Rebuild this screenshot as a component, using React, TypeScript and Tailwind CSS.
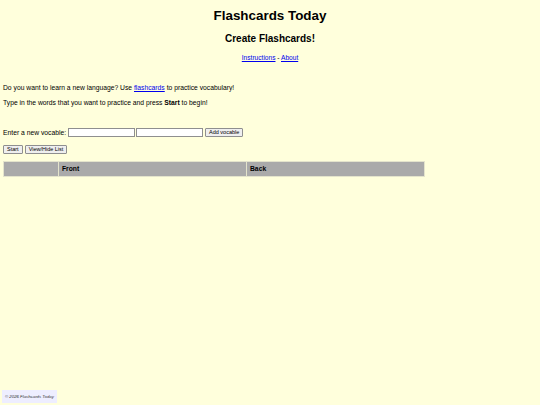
import { useState } from "react";

export default function App() {
  const [front, setFront] = useState("");
  const [back, setBack] = useState("");

  return (
    <div className="min-h-screen bg-[#ffffdc] text-black font-['Liberation_Sans',Arial,sans-serif] relative">
      <div className="px-[3px] pt-[7px]">
        <h1 className="text-center text-[13.4px] font-bold leading-[18px]">Flashcards Today</h1>
        <h2 className="mt-[7px] text-center text-[10px] font-bold leading-[14px]">Create Flashcards!</h2>
        <p className="mt-[7px] text-center text-[6.6px] leading-[9px]">
          <a href="#" className="text-[#0000ee] underline">Instructions</a> -{" "}
          <a href="#" className="text-[#0000ee] underline">About</a>
        </p>

        <p className="mt-[21px] text-[6.75px] leading-[9px]">
          Do you want to learn a new language? Use{" "}
          <a href="#" className="text-[#0000ee] underline">flashcards</a> to practice vocabulary!
        </p>
        <p className="mt-[6px] text-[6.75px] leading-[9px]">
          Type in the words that you want to practice and press <b>Start</b> to begin!
        </p>

        <div className="mt-[21px] flex items-center gap-[1px] text-[6.75px] leading-[9px]">
          <span className="mr-[1px]">Enter a new vocable:</span>
          <input
            value={front}
            onChange={(e) => setFront(e.target.value)}
            className="h-[9px] w-[67px] border border-[#8f8f8f] bg-white px-[1px] text-[6px] outline-none"
          />
          <input
            value={back}
            onChange={(e) => setBack(e.target.value)}
            className="h-[9px] w-[67px] border border-[#8f8f8f] bg-white px-[1px] text-[6px] outline-none"
          />
          <button className="ml-[1px] h-[9px] rounded-[1px] border border-[#8f8f8f] bg-[#efefef] px-[3px] text-[5.5px] leading-[7px]">
            Add vocable
          </button>
        </div>

        <div className="mt-[8px] flex gap-[2px]">
          <button className="h-[9px] rounded-[1px] border border-[#8f8f8f] bg-[#efefef] px-[3px] text-[5.5px] leading-[7px]">
            Start
          </button>
          <button className="h-[9px] rounded-[1px] border border-[#8f8f8f] bg-[#efefef] px-[3px] text-[5.5px] leading-[7px]">
            View/Hide List
          </button>
        </div>

        <table className="mt-[7px] w-[422px] border-separate border-spacing-[1px] bg-[#e4e4cc] text-[6.75px]">
          <thead>
            <tr className="h-[14px]">
              <th className="w-[54px] bg-[#aaaaaa]"></th>
              <th className="w-[187px] bg-[#aaaaaa] px-[3px] text-left font-bold">Front</th>
              <th className="bg-[#aaaaaa] px-[3px] text-left font-bold">Back</th>
            </tr>
          </thead>
        </table>
      </div>

      <div className="absolute left-[2px] bottom-[2px] bg-[#eeeeff] px-[3px] py-[4px] text-[4.3px] italic leading-[5px] text-[#333]">
        © 2026 Flashcards Today
      </div>
    </div>
  );
}
